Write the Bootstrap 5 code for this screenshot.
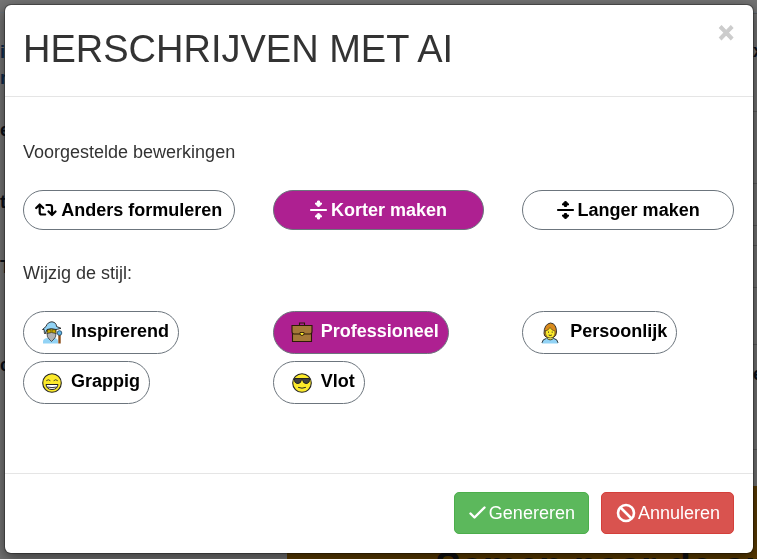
<!DOCTYPE html>
<html lang="nl">
<head>
<meta charset="utf-8">
<meta name="viewport" content="width=device-width, initial-scale=1">
<title>Herschrijven met AI</title>
<link href="https://cdn.jsdelivr.net/npm/bootstrap@5.3.0/dist/css/bootstrap.min.css" rel="stylesheet">
<style>
body { font-family: "Liberation Sans", Arial, sans-serif; font-size: 18px; line-height: 26px; color: #333; background: #757575; }
.under-page { height: 100vh; }
.under-side { color: #0a0f18; font-weight: 700; line-height: 26px; }
.under-left { padding-top: 26px; }
.under-left .blue { color: #102c4c; }
.under-right { width: 4px; }
.under-right div { border-top: 1px solid #5c5c5c; }
.h-20 { height: 20px; } .h-26 { height: 26px; } .h-42 { height: 42px; } .h-52 { height: 52px; }
.h-57 { height: 57px; } .h-65 { height: 65px; } .h-72 { height: 72px; } .h-98 { height: 98px; } .h-105 { height: 105px; }
.under-banner { height: 73px; margin-left: 287px; padding-left: 148px; background: #5c3c00; color: #111; font-size: 39px; font-weight: 700; line-height: 160px; white-space: nowrap; overflow: hidden; }
.rewrite-dialog { max-width: none; margin: 4px 3px 4px 4px; }
.rewrite-dialog .modal-content { border: 1px solid rgba(0,0,0,.3); background-clip: padding-box; border-radius: 7px; color: #333; box-shadow: 0 4px 14px rgba(0,0,0,.5); }
.rewrite-dialog .modal-header { padding: 17px 19px 19px 18px; border-color: #e5e5e5; }
.rewrite-dialog .modal-title { font-size: 38px; line-height: 55px; font-weight: 400; }
.close-x { border: 0; padding: 0; margin-top: 1px; background: none; color: #ccc; font-size: 27px; font-weight: 700; line-height: 20px; -webkit-text-stroke: 1px #ccc; }
.rewrite-dialog .modal-body { padding: 42px 19px 62px 18px; }
.part-label { margin-bottom: 25px; }
.part-next { margin-top: 30px; }
.choices { --bs-gutter-x: 38px; }
.styles { margin-top: 0; }
.styles > * { margin-top: 0; margin-bottom: 7px; }
.pill { --bs-btn-font-size: 18px; --bs-btn-font-weight: 700; --bs-btn-color: #000; --bs-btn-bg: #fff; --bs-btn-border-color: #6c757d; --bs-btn-border-radius: 22px; --bs-btn-hover-bg: #f3e3f0; --bs-btn-active-color: #fff; --bs-btn-active-bg: #ae2091; --bs-btn-active-border-color: #6c757d; --bs-btn-line-height: 26px; display: inline-flex; align-items: center; white-space: nowrap; }
.pill-action { height: 40px; width: 100%; justify-content: center; gap: 4px; padding: 0 8px; }
.pill-style { height: 43px; gap: 8px; padding: 0 9px 0 17px; }
.pill-style span { padding-bottom: 3px; }
.rewrite-dialog .modal-footer { padding: 18px 19px 19px 18px; gap: 12px; border-color: #e5e5e5; }
.rewrite-dialog .modal-footer > * { margin: 0; }
.act { --bs-btn-font-size: 18px; --bs-btn-color: #fff; --bs-btn-hover-color: #fff; --bs-btn-border-radius: 5px; height: 42px; padding: 0 13px 0 14px; display: inline-flex; align-items: center; gap: 3px; }
.act-go { --bs-btn-bg: #5cb85c; --bs-btn-border-color: #4cae4c; --bs-btn-hover-bg: #449d44; }
.act-stop { --bs-btn-bg: #d9534f; --bs-btn-border-color: #d43f3a; --bs-btn-hover-bg: #c9302c; gap: 2px; }
</style>
<script src="https://cdn.jsdelivr.net/npm/bootstrap@5.3.0/dist/js/bootstrap.bundle.min.js"></script>
</head>
<body class="overflow-hidden">
<div class="under-page d-flex flex-column overflow-hidden" aria-hidden="true">
  <div class="border-bottom border-secondary pt-2 pb-1"></div>
  <div class="d-flex justify-content-between flex-grow-1 overflow-hidden">
    <div class="under-side under-left">
      <div class="h-26 blue">ie</div><div class="h-52 blue">n</div><div class="h-72">er</div><div class="h-65">te</div><div class="h-98">T</div><div class="h-26">c</div>
    </div>
    <div class="under-side under-right">
      <div class="h-98 pt-4">x</div><div class="h-72"></div><div class="h-42"></div><div class="h-20"></div><div class="h-42"></div><div class="h-57"></div><div class="h-105 pt-3">e</div><div></div>
    </div>
  </div>
  <div class="under-banner">Samen naar de sp</div>
</div>

<div class="modal d-block" role="dialog" aria-modal="true" aria-labelledby="rewriteTitle">
  <div class="modal-dialog rewrite-dialog">
    <div class="modal-content">
      <div class="modal-header align-items-start">
        <h1 class="modal-title" id="rewriteTitle">HERSCHRIJVEN MET AI</h1>
        <button type="button" class="close-x" aria-label="Sluiten">×</button>
      </div>
      <div class="modal-body">
        <p class="part-label">Voorgestelde bewerkingen</p>
        <div class="row choices">
          <div class="col-4"><button type="button" class="btn pill pill-action">
            <svg width="22" height="14" viewBox="0 0 22 14" fill="none" stroke="currentColor" stroke-width="2.200" stroke-linecap="round" stroke-linejoin="round"><path d="M1.200 5 4.700 1.500 8.200 5M4.700 2v7.500q0 2 2 2h3.500M11.500 2h3.500q2 0 2 2v7.500M13.500 8.500l3.500 3.500 3.500-3.500"/></svg>
            <span>Anders formuleren</span></button></div>
          <div class="col-4"><button type="button" class="btn pill pill-action active" aria-pressed="true">
            <svg width="17" height="20" viewBox="0 0 17 20" fill="currentColor" stroke="currentColor" stroke-linejoin="round"><path d="M.5 9.500h16v1H.5z"/><path d="M7.500 1h2v2h2v1l-3 3-3-3V3h2zM7.500 19h2v-2h2v-1l-3-3-3 3v1h2z"/></svg>
            <span>Korter maken</span></button></div>
          <div class="col-4"><button type="button" class="btn pill pill-action">
            <svg width="17" height="20" viewBox="0 0 17 20" fill="currentColor" stroke="currentColor" stroke-linejoin="round"><path d="M.5 9.500h16v1H.5z"/><path d="M8.500 1l3 3v1h-2v1.500h-2V5h-2V4zM8.500 19l3-3v-1h-2v-1.500h-2V15h-2v1z"/></svg>
            <span>Langer maken</span></button></div>
        </div>
        <p class="part-label part-next">Wijzig de stijl:</p>
        <div class="row choices styles">
          <div class="col-4"><button type="button" class="btn pill pill-style">
            <svg width="22" height="23" viewBox="0 0 22 23" stroke="#222" stroke-linejoin="round"><path d="M18.500 12v10.500" stroke="#8a4b16" stroke-width="2.400"/><path d="M2 22.500v-2q0-3 4-3.500h8q3 .5 3 3.500v2z" fill="#92d3f5" stroke="none"/><path d="M6 8h9v5H6z" fill="#fcea2b" stroke-width=".8"/><path d="M6 12.500q4.500-2 9 0 0 4-2 5.500l-2.500 2.500L8 18q-2-1.500-2-5.500z" fill="#b1b2b3" stroke-width=".7"/><path d="M6.500 9h3.500v2.200H6.500zM11 9h3.500v2.200H11z" fill="#f1c800" stroke="#554800" stroke-width=".7"/><path d="M1.500 8.500 5 5.500Q6.500 1 11 .8q4.500.7 4.500 4.700l4.500 1.800Q16 8.500 15 8.500 10 6.800 6 8.500L4 13q-1-1-.8-4.500z" fill="#92d3f5" stroke-width=".9"/><circle cx="18.500" cy="12" r="2.300" fill="#61b2e4" stroke="#24506d" stroke-width=".9"/></svg>
            <span>Inspirerend</span></button></div>
          <div class="col-4"><button type="button" class="btn pill pill-style active" aria-pressed="true">
            <svg width="22" height="22" viewBox="0 0 22 22" fill="#a57939" stroke="#2b1a08" stroke-width="1.100"><path d="M8.500 3.500V1h5v2.500" fill="none"/><path d="M1.500 11v8.500h19V11"/><path d="M1 3.500h20v6q0 2.500-2 2.500H3q-2 0-2-2.500z"/><path d="M9 10.500h4v1q0 2-2 2t-2-2z" fill="#fcea2b" stroke-width=".9"/></svg>
            <span>Professioneel</span></button></div>
          <div class="col-4"><button type="button" class="btn pill pill-style">
            <svg width="22" height="22" viewBox="0 0 22 22" stroke="#222" stroke-linecap="round" stroke-linejoin="round"><path d="M2 21.500q0-4.500 4-5h8q4 .5 4 5z" fill="#92d3f5" stroke="none"/><path d="M2 20.500q.5-3.500 4-4M18 20.500q-.5-3.500-4-4" fill="none" stroke-width=".9"/><path d="M7 15.500q-3-1-3-4Q4 2 10.500 1q6 .5 6 9 0 4-3 5.500z" fill="#d98a1c" stroke-width=".9"/><path d="M5.500 9q3-.5 4.500-3.500 1.500 3 5 3.500.5 7-4.800 7T5.500 9z" fill="#fcea2b" stroke-width=".5"/><path d="M8.500 10v.3M12.200 10v.3M9 13.200q1.200.7 2.500 0" fill="none" stroke-width=".9"/><path d="M7 16.500q3.300 3 6.500 0" fill="#fcea2b" stroke-width=".8"/></svg>
            <span>Persoonlijk</span></button></div>
          <div class="col-4"><button type="button" class="btn pill pill-style">
            <svg width="22" height="22" viewBox="0 0 22 22" fill="none" stroke="#222"><circle cx="11" cy="11" r="9.300" fill="#fcea2b" stroke-width="1.100"/><path d="M5.500 8.500q1.800-1.800 3.600 0M12.900 8.500q1.800-1.800 3.600 0" stroke-linecap="round" stroke-width=".8"/><path d="M5 12.500h12q-.5 5-6 5t-6-5z" fill="#fff"/><path d="M6 15q5 1.200 10 0" stroke-width=".9"/></svg>
            <span>Grappig</span></button></div>
          <div class="col-4"><button type="button" class="btn pill pill-style">
            <svg width="22" height="22" viewBox="0 0 22 22" fill="none" stroke="#222"><circle cx="11" cy="11" r="9.300" fill="#fcea2b" stroke-width="1.100"/><path d="M3.500 6.500h15q.5 5-3.500 5-3 0-3.500-4h-1q-.5 4-3.500 4-4 0-3.500-5z" fill="#3f3f3f"/><path d="M7.500 15.500q3.500 1.500 7 0" stroke-linecap="round"/></svg>
            <span>Vlot</span></button></div>
        </div>
      </div>
      <div class="modal-footer">
        <button type="button" class="btn act act-go"><svg width="17" height="14" viewBox="0 0 17 14" fill="none" stroke="currentColor" stroke-width="2.400" stroke-linecap="round" stroke-linejoin="round"><path d="M1.500 7.500 5.500 11.500 15.500 1.500"/></svg><span>Genereren</span></button>
        <button type="button" class="btn act act-stop"><svg width="20" height="20" viewBox="0 0 20 20" fill="none" stroke="currentColor" stroke-width="2.600"><circle cx="10" cy="10" r="8"/><path d="m4.500 4.500 11 11"/></svg><span>Annuleren</span></button>
      </div>
    </div>
  </div>
</div>
</body>
</html>
